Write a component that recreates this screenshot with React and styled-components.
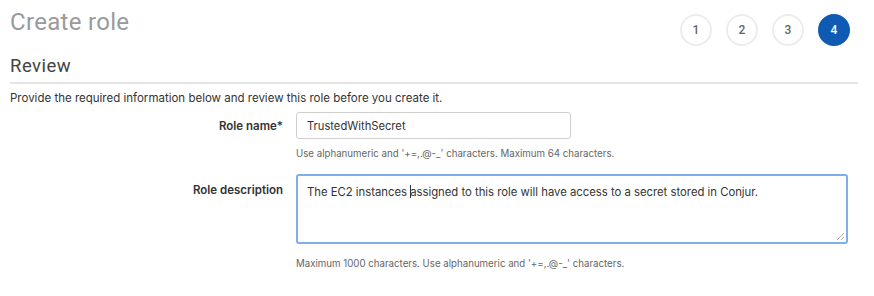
import styled, { createGlobalStyle } from "styled-components"

const GlobalStyle = createGlobalStyle`
body{
    margin: 0;
    background: #ffffff;
    font-family: Inter, Roboto, "Liberation Sans", Arial, sans-serif;
}
`

const steps = [1, 2, 3, 4]

export default function App(){
    return(
        <Page>
            <GlobalStyle/>
            <Header>
                <Title>Create role</Title>
                <Steps>
                    {steps.map(n => <Step key={n} active={n === 4}>{n}</Step>)}
                </Steps>
            </Header>
            <SectionTitle>Review</SectionTitle>
            <Intro>Provide the required information below and review this role before you create it.</Intro>
            <Form>
                <Label>Role name*</Label>
                <Field>
                    <TextInput>TrustedWithSecret</TextInput>
                    <Hint>Use alphanumeric and '+=,.@-_' characters. Maximum 64 characters.</Hint>
                </Field>
                <Label top>Role description</Label>
                <Field>
                    <TextArea>
                        The EC2 instances <Caret/>assigned to this role will have access to a secret stored in Conjur.
                        <Grip width="9" height="9" viewBox="0 0 9 9">
                            <path d="M8 1 L1 8 M8 5 L5 8" stroke="#aaaaaa" strokeWidth="1"/>
                        </Grip>
                    </TextArea>
                    <Hint wide>Maximum 1000 characters. Use alphanumeric and '+=,.@-_' characters.</Hint>
                </Field>
            </Form>
        </Page>
    )
}

const Page = styled.div`
width: 874px;
height: 296px;
box-sizing: border-box;
padding: 8px 16px 0 10px;
`

const Header = styled.div`
display: flex;
justify-content: space-between;
align-items: flex-start;
`

const Title = styled.h1`
margin: 0;
font-family: Roboto, sans-serif;
font-size: 24px;
font-weight: 400;
letter-spacing: 0.3px;
line-height: 28px;
color: #9a9a9a;
`

const Steps = styled.div`
display: flex;
gap: 14px;
margin-top: 6px;
margin-right: 8px;
`

const Step = styled.div`
width: 32px;
height: 32px;
box-sizing: border-box;
border-radius: 50%;
display: flex;
align-items: center;
justify-content: center;
font-family: Roboto, sans-serif;
font-size: 12px;
font-weight: 500;
color: ${p => p.active ? "#ffffff" : "#666666"};
background: ${p => p.active ? "#0f5bb3" : "#ffffff"};
border: 2px solid ${p => p.active ? "#0f5bb3" : "#ececec"};
`

const SectionTitle = styled.h2`
margin: 9px 0 0 0;
padding-bottom: 5px;
font-family: Roboto, sans-serif;
font-size: 18.5px;
font-weight: 400;
letter-spacing: 0.5px;
line-height: 22px;
color: #444444;
border-bottom: 2px solid #e4e4e4;
`

const Intro = styled.p`
margin: 7px 0 0 0;
font-size: 11.5px;
line-height: 14px;
color: #333333;
`

const Form = styled.div`
display: grid;
grid-template-columns: 273px 552px;
column-gap: 13px;
row-gap: 14px;
margin-top: 7px;
`

const Label = styled.div`
text-align: right;
font-size: 11.5px;
font-weight: 600;
color: #333333;
padding-top: ${p => p.top ? "9px" : "7px"};
line-height: 14px;
`

const Field = styled.div`
display: flex;
flex-direction: column;
`

const TextInput = styled.div`
width: 275px;
height: 27px;
box-sizing: border-box;
border: 1px solid #cfcfcf;
border-radius: 3px;
padding: 0 10px;
display: flex;
align-items: center;
font-size: 11.2px;
color: #333333;
`

const TextArea = styled.div`
position: relative;
width: 552px;
height: 70px;
box-sizing: border-box;
border: 2px solid #7db0ea;
border-radius: 3px;
padding: 9px 9px;
font-size: 11.3px;
line-height: 14px;
color: #333333;
`

const Caret = styled.span`
display: inline-block;
width: 1px;
height: 13px;
background: #333333;
vertical-align: -2px;
margin-right: -1px;
`

const Grip = styled.svg`
position: absolute;
right: 1px;
bottom: 1px;
`

const Hint = styled.div`
margin-top: ${p => p.wide ? "14px" : "9px"};
font-size: 9.7px;
line-height: 12px;
color: #666666;
`
